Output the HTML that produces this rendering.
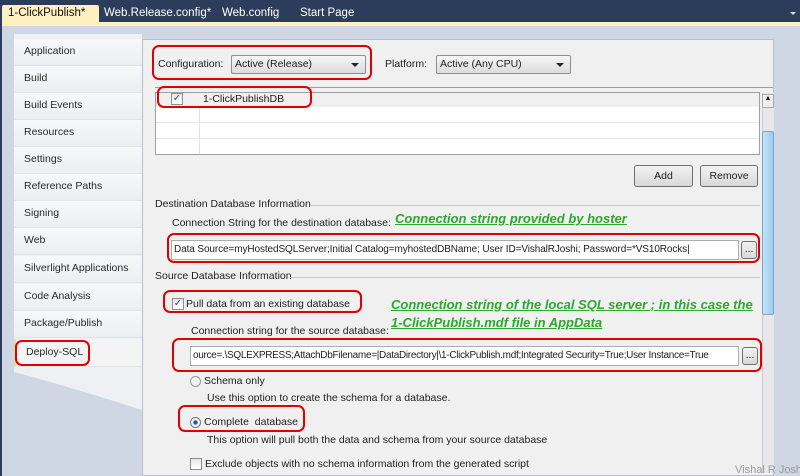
<!DOCTYPE html>
<html><head><style>
*{margin:0;padding:0;box-sizing:border-box}
body{width:800px;height:476px;overflow:hidden;background:#2c3d5b;font-family:"Liberation Sans",sans-serif;font-size:10.5px;color:#1e1e1e;position:relative}
.a{position:absolute;white-space:nowrap}
.tab{position:absolute;top:5px;height:18px;color:#fff;font-size:11.5px;padding-top:2px}
.nav{position:absolute;left:14px;width:128px;height:27px;border-bottom:1px solid #e2e4ea;background:linear-gradient(#f8f8fa,#eceef2);padding:6px 0 0 10px;font-size:10.5px;color:#2a2a2a}
.red{position:absolute;border:2px solid #e00000;border-radius:7px}
.dd{position:absolute;height:19px;border:1px solid #8e8f8f;border-radius:2px;background:linear-gradient(#f6f6f6,#dcdcdc);padding:2px 3px;font-size:10.5px}
.dd:after{content:"";position:absolute;right:6px;top:7px;border:4px solid transparent;border-top:4px solid #222;border-bottom:0}
.btn{position:absolute;height:22px;border:1px solid #707070;border-radius:3px;background:linear-gradient(#f2f2f2,#d8d8d8);text-align:center;padding-top:4px;font-size:10.5px}
.tb{position:absolute;height:20px;background:#fff;border:1px solid #abadb3;padding:3px 2px;font-size:10px;overflow:hidden;white-space:nowrap;letter-spacing:-0.1px}
.g{position:absolute;color:#2ca82c;font-weight:bold;font-style:italic;font-size:13px;text-decoration:underline;white-space:nowrap}
.cb{position:absolute;width:12px;height:12px;border:1px solid #8f8f8f;background:linear-gradient(#e8e8e8,#fff);font-size:10px;line-height:10px;text-align:center;color:#2b4a8a}
.line{position:absolute;height:1px;background:#c8c8c8}
</style></head><body>
<div class="a" style="left:0;top:0;width:800px;height:24px;background:#2c3d5b"></div>
<div class="tab" style="left:2px;width:97px;background:#fff0c0;color:#111;border-radius:2px 2px 0 0;padding-left:6px">1-ClickPublish* &nbsp;✕</div>
<div class="tab" style="left:104px">Web.Release.config*</div>
<div class="tab" style="left:222px">Web.config</div>
<div class="tab" style="left:300px">Start Page</div>
<div class="a" style="left:790px;top:12px;border:3px solid transparent;border-top:3px solid #ddd"></div>
<div class="a" style="left:2px;top:22px;width:798px;height:4px;background:#fff0c0"></div>
<div class="a" style="left:2px;top:26px;width:798px;height:450px;background:#cfd7e5"></div>
<div class="a" style="left:14px;top:34px;width:128px;height:332px;background:#eef0f4"></div>
<svg class="a" style="left:14px;top:366px" width="128" height="50"><path d="M0 0H128V44 Q60 22 0 6Z" fill="#eef0f4"/></svg>
<div class="nav" style="top:39px">Application</div>
<div class="nav" style="top:66px">Build</div>
<div class="nav" style="top:93px">Build Events</div>
<div class="nav" style="top:120px">Resources</div>
<div class="nav" style="top:147px">Settings</div>
<div class="nav" style="top:174px">Reference Paths</div>
<div class="nav" style="top:201px">Signing</div>
<div class="nav" style="top:228px">Web</div>
<div class="nav" style="top:256px">Silverlight Applications</div>
<div class="nav" style="top:284px">Code Analysis</div>
<div class="nav" style="top:311px">Package/Publish</div>
<div class="nav" style="top:339px;background:#f4f4f4;border-left:2px solid #f5d890;height:28px;padding-top:7px">Deploy-SQL</div>
<div class="red" style="left:15px;top:340px;width:75px;height:26px"></div>
<div class="a" style="left:142px;top:39px;width:632px;height:437px;background:#f0f0f0;border:1px solid #b8bfcc"></div>
<div class="red" style="left:152px;top:45px;width:220px;height:35px"></div>
<div class="a" style="left:158px;top:58px">Configuration:</div>
<div class="dd" style="left:231px;top:55px;width:135px">Active (Release)</div>
<div class="a" style="left:385px;top:58px">Platform:</div>
<div class="dd" style="left:436px;top:55px;width:135px">Active (Any CPU)</div>
<div class="line" style="left:155px;top:87px;width:618px;background:#a0a0a0"></div>
<div class="a" style="left:155px;top:92px;width:605px;height:63px;background:#fff;border:1px solid #a0a0a0"></div>
<div class="a" style="left:156px;top:93px;width:603px;height:14px;background:#f0f0f0"></div>
<div class="a" style="left:199px;top:107px;width:1px;height:47px;background:#e0e0e0"></div>
<div class="line" style="left:156px;top:122px;width:603px;background:#e8e8e8"></div>
<div class="line" style="left:156px;top:138px;width:603px;background:#e8e8e8"></div>
<div class="cb" style="left:171px;top:93px">✓</div>
<div class="a" style="left:203px;top:93px">1-ClickPublishDB</div>
<div class="red" style="left:157px;top:86px;width:155px;height:22px"></div>
<div class="a" style="left:762px;top:93px;width:12px;height:380px;background:#e8e8ea;border-left:1px solid #ccc"></div>
<div class="a" style="left:762px;top:94px;width:12px;height:14px;background:#eee;border:1px solid #aaa;font-size:7px;text-align:center">▲</div>
<div class="a" style="left:762px;top:131px;width:12px;height:184px;background:linear-gradient(90deg,#c6e2f8,#9ccaf0);border:1px solid #7aa6cc;border-radius:2px"></div>
<div class="btn" style="left:634px;top:165px;width:59px">Add</div>
<div class="btn" style="left:700px;top:165px;width:58px">Remove</div>
<div class="a" style="left:155px;top:198px">Destination Database Information</div>
<div class="line" style="left:310px;top:205px;width:450px"></div>
<div class="a" style="left:172px;top:217px">Connection String for the destination database:</div>
<div class="g" style="left:395px;top:211px">Connection string provided by hoster</div>
<div class="tb" style="left:171px;top:240px;width:568px">Data Source=myHostedSQLServer;Initial Catalog=myhostedDBName; User ID=VishalRJoshi; Password=*VS10Rocks|</div>
<div class="btn" style="left:741px;top:241px;width:16px;height:18px;padding-top:1px">...</div>
<div class="red" style="left:167px;top:233px;width:593px;height:30px"></div>
<div class="a" style="left:155px;top:270px">Source Database Information</div>
<div class="line" style="left:290px;top:277px;width:470px"></div>
<div class="cb" style="left:172px;top:298px">✓</div>
<div class="a" style="left:186px;top:298px">Pull data from an existing database</div>
<div class="red" style="left:163px;top:290px;width:199px;height:23px"></div>
<div class="g" style="left:391px;top:297px">Connection string of the local SQL server ; in this case the</div>
<div class="g" style="left:391px;top:315px">1-ClickPublish.mdf file in AppData</div>
<div class="a" style="left:191px;top:325px">Connection string for the source database:</div>
<div class="tb" style="left:190px;top:346px;width:549px;letter-spacing:-0.3px">ource=.\SQLEXPRESS;AttachDbFilename=|DataDirectory|\1-ClickPublish.mdf;Integrated Security=True;User Instance=True</div>
<div class="btn" style="left:742px;top:347px;width:16px;height:18px;padding-top:1px">...</div>
<div class="red" style="left:172px;top:338px;width:590px;height:34px"></div>
<div class="a" style="left:190px;top:376px;width:11px;height:11px;border:1px solid #999;border-radius:50%;background:#f4f4f4"></div>
<div class="a" style="left:204px;top:375px">Schema only</div>
<div class="a" style="left:207px;top:392px">Use this option to create the schema for a database.</div>
<div class="a" style="left:190px;top:417px;width:11px;height:11px;border:1px solid #777;border-radius:50%;background:radial-gradient(#1a5fb4 30%,#f4f4f4 40%)"></div>
<div class="a" style="left:204px;top:416px">Complete&nbsp; database</div>
<div class="red" style="left:178px;top:405px;width:127px;height:27px"></div>
<div class="a" style="left:207px;top:434px">This option will pull both the data and schema from your source database</div>
<div class="cb" style="left:190px;top:458px;color:transparent"></div>
<div class="a" style="left:205px;top:458px">Exclude objects with no schema information from the generated script</div>
<div class="a" style="left:735px;top:464px;color:#999;font-size:11px">Vishal R Joshi</div>
</body></html>
